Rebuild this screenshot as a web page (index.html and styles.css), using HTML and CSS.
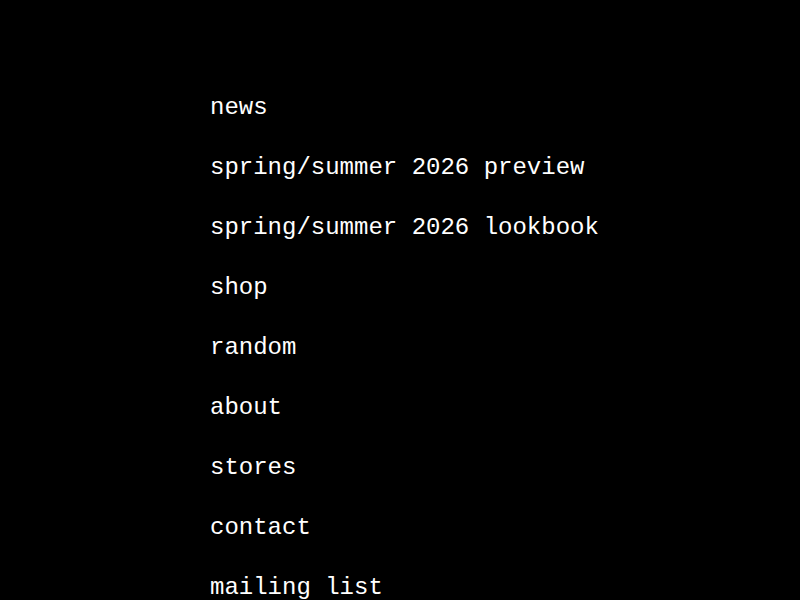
FILE: index.html
```html
<!DOCTYPE html>
<html lang="en">
<head>
    <meta charset="UTF-8">
    <meta name="viewport" content="width=device-width, initial-scale=1.0">
    <title>menu</title>
    <link rel="stylesheet" href="styles.css">
</head>
<body>
    <nav class="menu">
        <ul>
            <li><a href="#">news</a></li>
            <li><a href="#">spring/summer 2026 preview</a></li>
            <li><a href="#">spring/summer 2026 lookbook</a></li>
            <li><a href="#">shop</a></li>
            <li><a href="#">random</a></li>
            <li><a href="#">about</a></li>
            <li><a href="#">stores</a></li>
            <li><a href="#">contact</a></li>
            <li><a href="#">mailing list</a></li>
        </ul>
    </nav>
</body>
</html>
```

FILE: styles.css
```css
body {
    margin: 0;
    background-color: #000;
    color: #fff;
    font-family: 'Liberation Mono', monospace;
    font-size: 24px;
}
.menu {
    padding: 78px 0 0 210px;
}
.menu ul {
    list-style: none;
    margin: 0;
    padding: 0;
}
.menu li {
    line-height: 60px;
}
.menu a {
    color: #fff;
    text-decoration: none;
}
```
